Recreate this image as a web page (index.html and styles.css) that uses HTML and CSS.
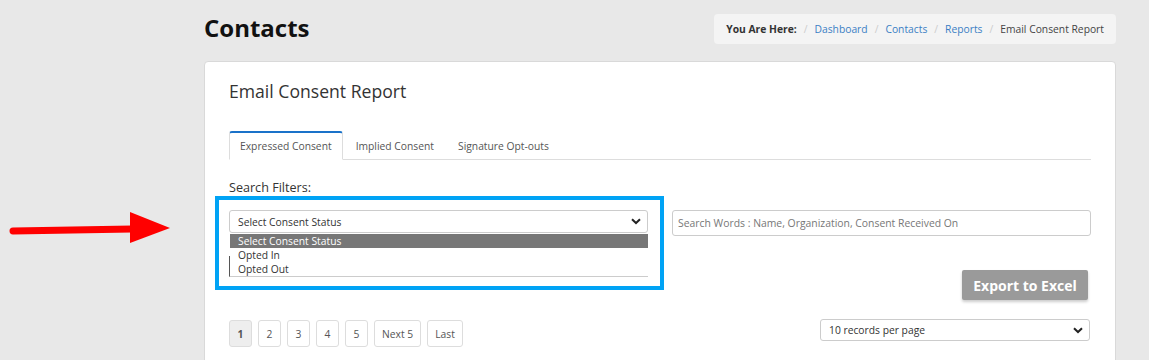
FILE: index.html
```html
<!DOCTYPE html>
<html lang="en">
<head>
    <meta charset="UTF-8">
    <meta name="viewport" content="width=device-width, initial-scale=1.0">
    <title>Email Consent Report</title>
    <link rel="stylesheet" href="styles.css">
</head>
<body>
    <!-- Annotation arrow -->
    <svg class="pointer-arrow" width="180" height="40" viewBox="0 0 180 40">
        <line x1="13" y1="23" x2="132" y2="21" stroke="#ff0000" stroke-width="7" stroke-linecap="round"/>
        <polygon points="130,4 170,20 130,35" fill="#ff0000"/>
    </svg>

    <div class="page">
        <div class="page-header">
            <h1>Contacts</h1>
            <div class="breadcrumb">
                <span class="here">You Are Here:</span>
                <span class="sep">/</span>
                <a href="#">Dashboard</a>
                <span class="sep">/</span>
                <a href="#">Contacts</a>
                <span class="sep">/</span>
                <a href="#">Reports</a>
                <span class="sep">/</span>
                <span class="current">Email Consent Report</span>
            </div>
        </div>

        <div class="card">
            <h2 class="card-title">Email Consent Report</h2>

            <ul class="tabs">
                <li class="tab active">Expressed Consent</li>
                <li class="tab">Implied Consent</li>
                <li class="tab">Signature Opt-outs</li>
            </ul>

            <div class="filters-label">Search Filters:</div>

            <div class="filter-grid">
                <div class="filter-col">
                    <div class="highlight-box"></div>
                    <div class="select-box">
                        <span>Select Consent Status</span>
                        <svg class="chevron" width="10" height="7" viewBox="0 0 10 7">
                            <path d="M1 1.2 L5 5 L9 1.2" fill="none" stroke="#222" stroke-width="2"/>
                        </svg>
                    </div>
                    <ul class="dropdown-list">
                        <li class="selected">Select Consent Status</li>
                        <li>Opted In</li>
                        <li>Opted Out</li>
                    </ul>
                </div>
                <div class="filter-col">
                    <input class="search-input" type="text" placeholder="Search Words : Name, Organization, Consent Received On">
                </div>
                <div class="field-behind"></div>
                <div class="export-cell">
                    <button class="export-button">Export to Excel</button>
                </div>
            </div>

            <div class="pager-row">
                <div class="pagination">
                    <a href="#" class="page-btn active">1</a>
                    <a href="#" class="page-btn">2</a>
                    <a href="#" class="page-btn">3</a>
                    <a href="#" class="page-btn">4</a>
                    <a href="#" class="page-btn">5</a>
                    <a href="#" class="page-btn wide">Next 5</a>
                    <a href="#" class="page-btn wide">Last</a>
                </div>
                <div class="select-box per-page">
                    <span>10 records per page</span>
                    <svg class="chevron" width="10" height="7" viewBox="0 0 10 7">
                        <path d="M1 1.2 L5 5 L9 1.2" fill="none" stroke="#222" stroke-width="2"/>
                    </svg>
                </div>
            </div>
        </div>
    </div>
</body>
</html>
```

FILE: styles.css
```css
body {
    font-family: "Open Sans", Arial, sans-serif;
    background-color: #e8e8e8;
    margin: 0;
    color: #333;
    position: relative;
}
.pointer-arrow {
    position: absolute;
    left: 0;
    top: 208px;
}
.page {
    width: 912px;
    margin-left: 204px;
    padding-top: 14px;
}
.page-header {
    display: flex;
    justify-content: space-between;
    align-items: flex-start;
}
.page-header h1 {
    margin: 0;
    font-size: 24px;
    line-height: 28px;
    font-weight: 700;
    color: #111;
}
.breadcrumb {
    background: #f4f4f4;
    border-radius: 4px;
    height: 30px;
    padding: 0 12px;
    display: flex;
    align-items: center;
    gap: 7px;
    font-size: 10.3px;
    color: #444;
}
.breadcrumb .here {
    font-weight: 700;
    color: #333;
}
.breadcrumb a {
    color: #3b7fc4;
    text-decoration: none;
}
.breadcrumb .sep {
    color: #ccc;
}
.card {
    margin-top: 17px;
    background: #fff;
    border: 1px solid #d9d9d9;
    border-radius: 4px;
    padding: 17px 24px 20px 24px;
    min-height: 300px;
}
.card-title {
    margin: 0;
    font-size: 17.6px;
    line-height: 24px;
    font-weight: 400;
    color: #333;
}
.tabs {
    list-style: none;
    margin: 28px 0 0 0;
    padding: 0;
    display: flex;
    border-bottom: 1px solid #ddd;
}
.tab {
    font-size: 10.3px;
    color: #555;
    height: 26px;
    line-height: 26px;
    padding: 0 10px;
    margin-right: 2px;
    border: 1px solid transparent;
    border-top: 2px solid transparent;
    margin-bottom: -1px;
}
.tab.active {
    border-color: #ddd;
    border-top-color: #1a72c9;
    border-bottom-color: #fff;
    border-radius: 3px 3px 0 0;
}
.filters-label {
    margin-top: 18px;
    font-size: 12.6px;
    line-height: 19px;
    color: #333;
}
.filter-grid {
    margin-top: 13px;
    display: grid;
    grid-template-columns: 1fr 1fr;
    column-gap: 24px;
    row-gap: 20px;
}
.filter-col {
    position: relative;
}
.highlight-box {
    position: absolute;
    left: -14px;
    top: -14px;
    right: -16px;
    height: 94px;
    border: 4px solid #00a3f5;
    box-sizing: border-box;
}
.select-box {
    height: 23px;
    border: 1px solid #ccc;
    border-radius: 3px;
    box-sizing: border-box;
    display: flex;
    align-items: center;
    justify-content: space-between;
    padding: 0 6px 0 8px;
    font-size: 10.3px;
    color: #333;
    background: #fff;
}
.chevron {
    flex-shrink: 0;
}
.field-behind {
    height: 20px;
    border-left: 1px solid #555;
    border-bottom: 1px solid #ccc;
}
.dropdown-list {
    position: absolute;
    left: 1px;
    right: 0;
    top: 24px;
    margin: 0;
    padding: 0;
    list-style: none;
    background: #fff;
    font-size: 10.3px;
    line-height: 14px;
    color: #333;
    z-index: 2;
}
.dropdown-list li {
    padding: 0 8px;
}
.dropdown-list li.selected {
    background: #777;
    color: #fff;
}
.search-input {
    display: block;
    width: 100%;
    box-sizing: border-box;
    height: 26px;
    border: 1px solid #ccc;
    border-radius: 3px;
    padding: 0 5px;
    font-family: "Open Sans", Arial, sans-serif;
    font-size: 10.4px;
}
.search-input::placeholder {
    color: #777;
}
.export-cell {
    display: flex;
    justify-content: flex-end;
    padding: 14px 3px 0 0;
}
.export-button {
    background: #9a9a9a;
    color: #fff;
    border: none;
    border-radius: 2px;
    width: 126px;
    height: 30px;
    font-family: "Open Sans", Arial, sans-serif;
    font-size: 14px;
    font-weight: 700;
    box-shadow: 0 2px 3px rgba(0, 0, 0, 0.2);
    cursor: pointer;
}
.pager-row {
    margin-top: 20px;
    display: flex;
    justify-content: space-between;
    align-items: flex-start;
}
.pagination {
    display: flex;
    gap: 6px;
}
.page-btn {
    min-width: 23px;
    height: 27px;
    box-sizing: border-box;
    border: 1px solid #ddd;
    border-radius: 3px;
    display: flex;
    align-items: center;
    justify-content: center;
    font-size: 10.3px;
    color: #555;
    text-decoration: none;
}
.page-btn.wide {
    padding: 0 7px;
}
.page-btn.active {
    background: #eee;
    font-weight: 700;
}
.per-page {
    width: 270px;
    height: 22px;
    margin-top: -1px;
    margin-right: 1px;
}
```
